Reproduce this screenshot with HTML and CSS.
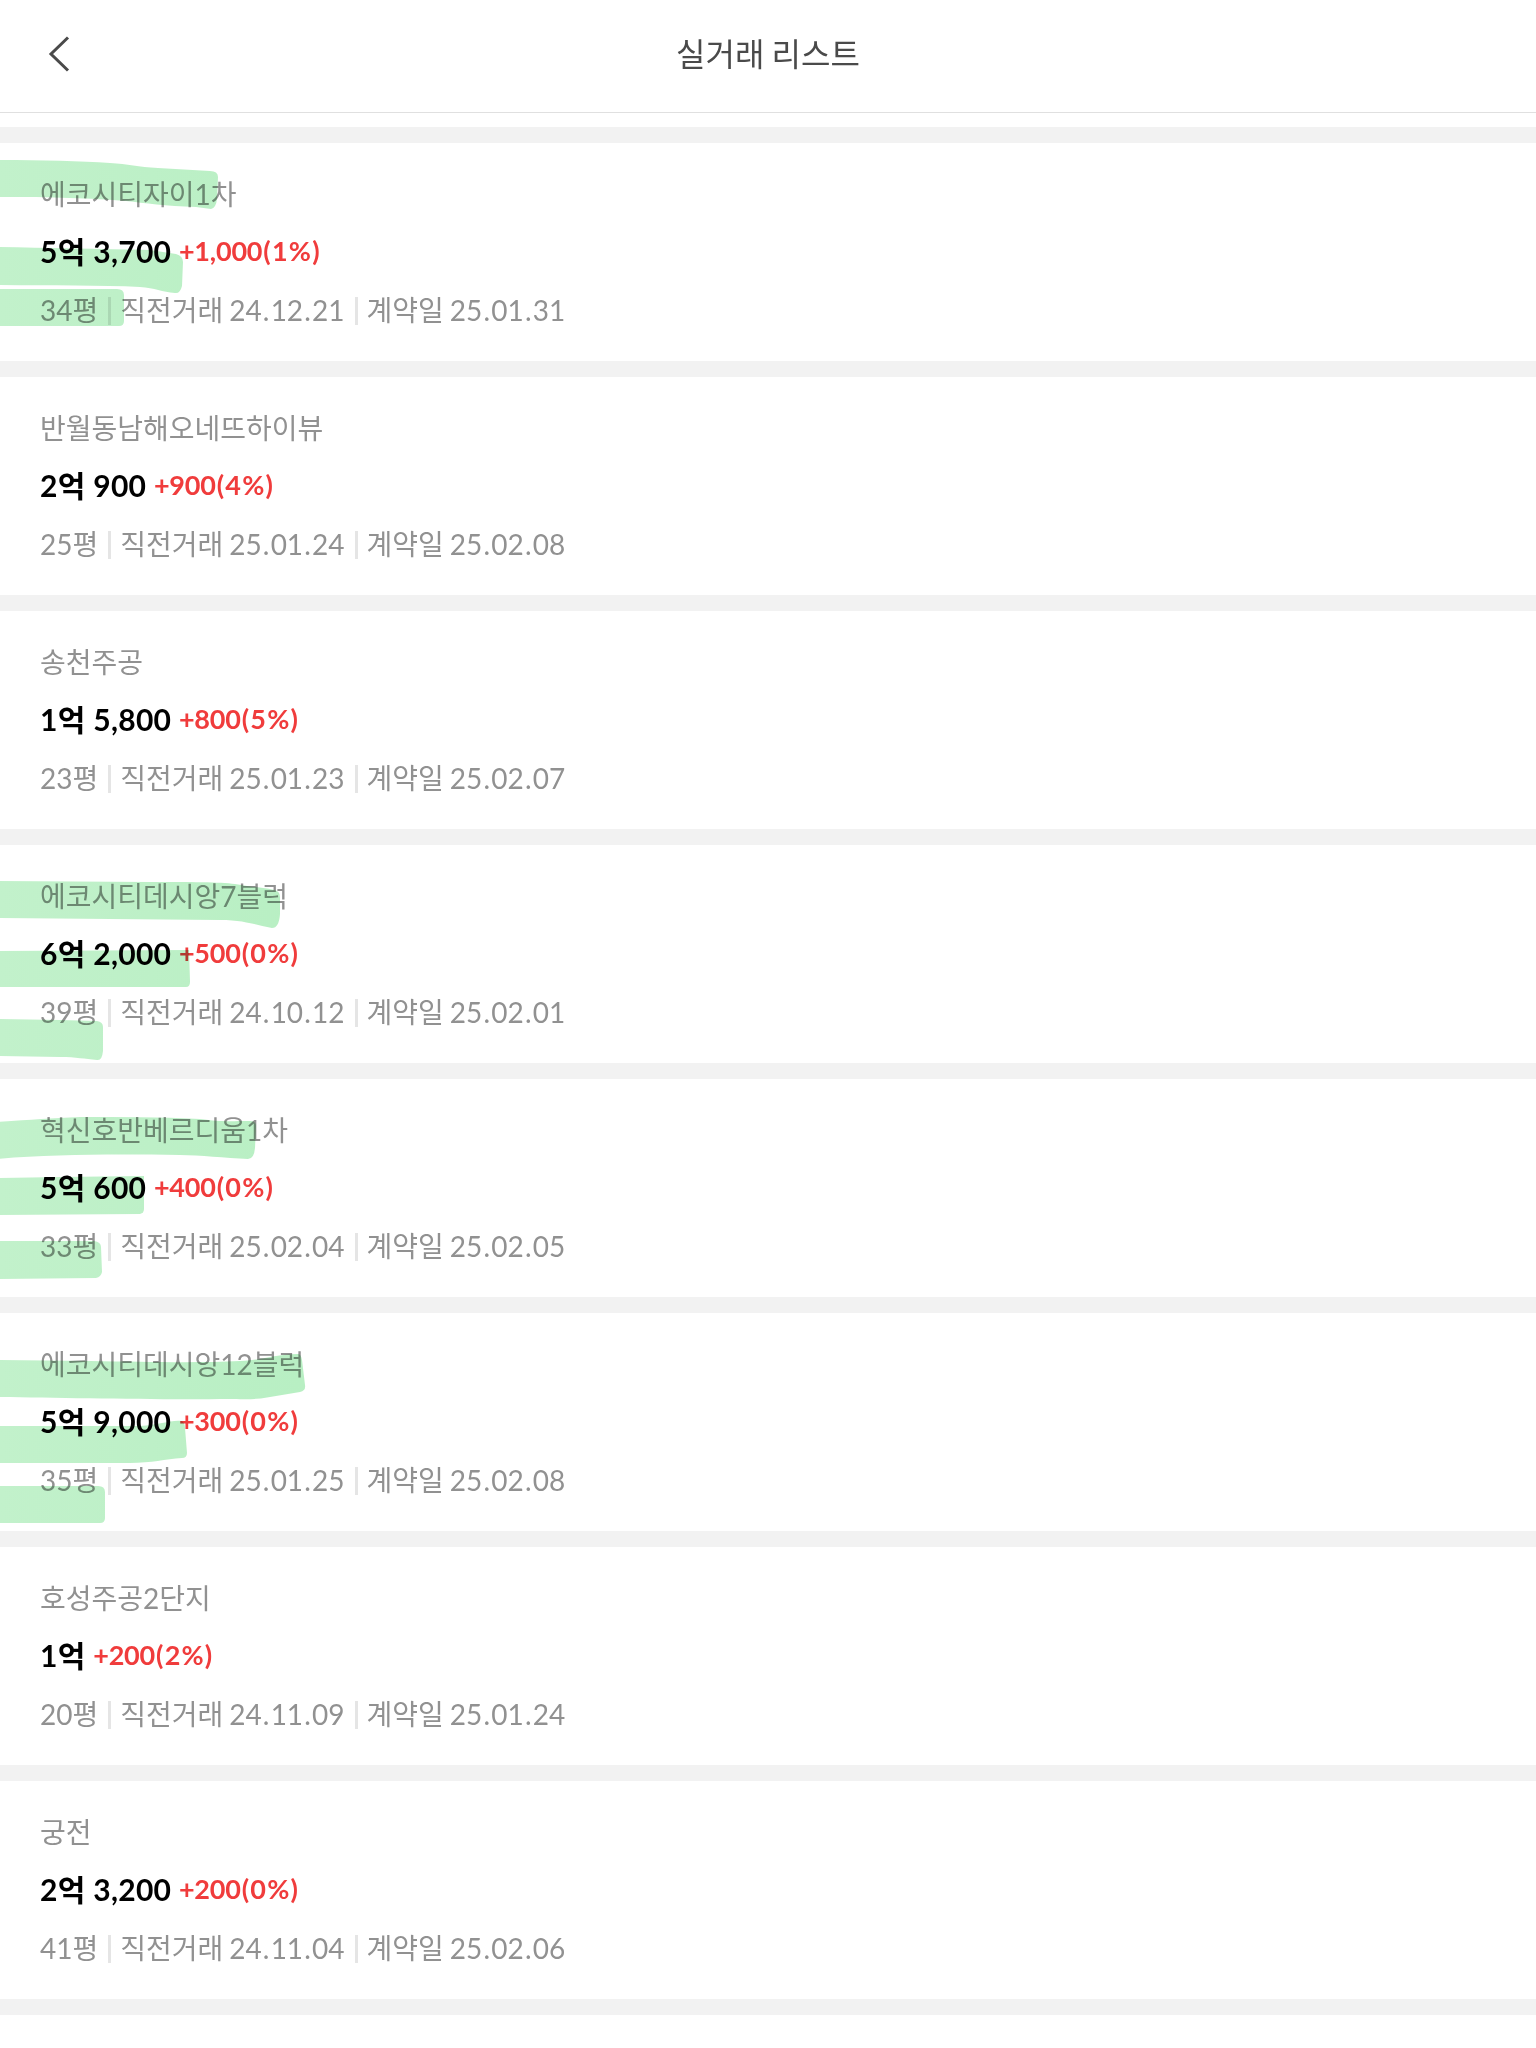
FILE: index.html
```
<!DOCTYPE html>
<html lang="ko">
<head>
    <meta charset="UTF-8">
    <meta name="viewport" content="width=device-width, initial-scale=1.0">
    <title>실거래 리스트</title>
    <link rel="stylesheet" href="styles.css">
</head>
<body>
    <header class="header">
        <button class="back" aria-label="뒤로">
            <svg width="24" height="40" viewBox="0 0 24 40"><path d="M20 3.5L3 20L20 36.5"/></svg>
        </button>
        <h1>실거래 리스트</h1>
    </header>

    <main class="list">
        <section class="item">
            <h2 class="name">에코시티자이1차</h2>
            <p class="price">5억 3,700 <span class="change">+1,000<span class="rate">(1%)</span></span></p>
            <p class="detail"><span>34평</span><span>직전거래 24<i>.</i>12<i>.</i>21</span><span>계약일 25<i>.</i>01<i>.</i>31</span></p>
        </section>
        <section class="item">
            <h2 class="name">반월동남해오네뜨하이뷰</h2>
            <p class="price">2억 900 <span class="change">+900<span class="rate">(4%)</span></span></p>
            <p class="detail"><span>25평</span><span>직전거래 25<i>.</i>01<i>.</i>24</span><span>계약일 25<i>.</i>02<i>.</i>08</span></p>
        </section>
        <section class="item">
            <h2 class="name">송천주공</h2>
            <p class="price">1억 5,800 <span class="change">+800<span class="rate">(5%)</span></span></p>
            <p class="detail"><span>23평</span><span>직전거래 25<i>.</i>01<i>.</i>23</span><span>계약일 25<i>.</i>02<i>.</i>07</span></p>
        </section>
        <section class="item">
            <h2 class="name">에코시티데시앙7블럭</h2>
            <p class="price">6억 2,000 <span class="change">+500<span class="rate">(0%)</span></span></p>
            <p class="detail"><span>39평</span><span>직전거래 24<i>.</i>10<i>.</i>12</span><span>계약일 25<i>.</i>02<i>.</i>01</span></p>
        </section>
        <section class="item">
            <h2 class="name">혁신호반베르디움1차</h2>
            <p class="price">5억 600 <span class="change">+400<span class="rate">(0%)</span></span></p>
            <p class="detail"><span>33평</span><span>직전거래 25<i>.</i>02<i>.</i>04</span><span>계약일 25<i>.</i>02<i>.</i>05</span></p>
        </section>
        <section class="item">
            <h2 class="name">에코시티데시앙12블럭</h2>
            <p class="price">5억 9,000 <span class="change">+300<span class="rate">(0%)</span></span></p>
            <p class="detail"><span>35평</span><span>직전거래 25<i>.</i>01<i>.</i>25</span><span>계약일 25<i>.</i>02<i>.</i>08</span></p>
        </section>
        <section class="item">
            <h2 class="name">호성주공2단지</h2>
            <p class="price">1억 <span class="change">+200<span class="rate">(2%)</span></span></p>
            <p class="detail"><span>20평</span><span>직전거래 24<i>.</i>11<i>.</i>09</span><span>계약일 25<i>.</i>01<i>.</i>24</span></p>
        </section>
        <section class="item">
            <h2 class="name">궁전</h2>
            <p class="price">2억 3,200 <span class="change">+200<span class="rate">(0%)</span></span></p>
            <p class="detail"><span>41평</span><span>직전거래 24<i>.</i>11<i>.</i>04</span><span>계약일 25<i>.</i>02<i>.</i>06</span></p>
        </section>
    </main>

    <!-- highlighter strokes -->
    <svg class="marker" width="400" height="2048" viewBox="0 0 400 2048">
        <defs>
            <linearGradient id="ink" gradientUnits="userSpaceOnUse" x1="0" y1="0" x2="300" y2="0">
                <stop offset="0" stop-color="#c2f1cb"/>
                <stop offset="1" stop-color="#b8efc3"/>
            </linearGradient>
        </defs>
        <g fill="url(#ink)">
            <path d="M-4 160C40 160 80 161 110 163C128 164 138 167 158 168L210 171Q218 171 218 177L217 199Q216 208 211 209L196 207C165 206 145 203 126 201C90 198 50 197 -4 197Z"/>
            <path d="M-4 247C40 248 100 249 150 250L176 254Q183 256 183 262L182 286Q180 294 175 293C162 292 155 288 140 287C100 285 50 286 -4 285Z"/>
            <path d="M-4 289L117 289Q124 289 124 295L124 321Q124 326 119 326L-4 326Z"/>
            <path d="M-4 881L150 882C190 882 220 882 235 884C250 887 262 887 274 890Q280 891 280 897L280 914Q279 928 272 928C258 926 246 920 220 920L-4 918Z"/>
            <path d="M-4 951L189 950L190 982Q190 987 186 987L-4 987Z"/>
            <path d="M-4 1019L60 1020L97 1021Q103 1022 103 1027L103 1051Q102 1061 97 1060C84 1059 77 1057 60 1057L-4 1056Z"/>
            <path d="M-4 1122C30 1120 50 1118 80 1117C120 1117 160 1117 200 1119C220 1122 230 1121 250 1121Q256 1121 256 1126L255 1148Q254 1159 248 1159C225 1158 200 1155 180 1155C120 1154 50 1154 -4 1159Z"/>
            <path d="M-4 1178L60 1177L144 1176L144 1209Q144 1213 140 1214L-4 1215Z"/>
            <path d="M-4 1241L94 1241Q101 1242 101 1247L102 1272Q101 1277 96 1278L-4 1279Z"/>
            <path d="M-4 1360L90 1361C150 1362 200 1363 240 1361C265 1360 275 1354 298 1354Q301 1354 302 1360L305 1385Q306 1391 300 1392L270 1397C255 1400 240 1399 230 1399C160 1400 60 1398 -4 1397Z"/>
            <path d="M-4 1426L140 1426C160 1425 170 1420 181 1421Q185 1422 185 1428L187 1453Q187 1458 182 1458C165 1459 152 1463 130 1463L-4 1463Z"/>
            <path d="M-4 1486L98 1486Q105 1486 105 1492L105 1518Q105 1523 100 1523L-4 1523Z"/>
        </g>
    </svg>
</body>
</html>
```
FILE: styles.css
```
* {
    box-sizing: border-box;
}
body {
    position: relative;
    margin: 0;
    height: 2048px;
    overflow: hidden;
    background-color: #fff;
    font-family: Lato, "Noto Sans CJK KR", sans-serif;
    font-kerning: none;
}
h1, h2, p {
    margin: 0;
    font-weight: 400;
}
.header {
    display: grid;
    grid-template-columns: 120px 1fr 120px;
    align-items: center;
    height: 113px;
    padding-bottom: 5px;
    border-bottom: 1px solid #e0e0e0;
}
.header h1 {
    font-size: 32px;
    line-height: 48px;
    text-align: center;
    word-spacing: -1px;
    color: #4a4a4a;
}
.back {
    display: flex;
    padding: 0 0 0 48px;
    border: none;
    background: none;
}
.back path {
    fill: none;
    stroke: #4a4a4a;
    stroke-width: 3;
}
.list {
    padding-top: 14px;
}
.item {
    height: 234px;
    padding: 30px 40px 0;
    border-top: 16px solid #f2f2f2;
}
.item:last-child {
    height: 250px;
    border-bottom: 16px solid #f2f2f2;
}
.name {
    font-size: 28px;
    line-height: 42px;
    color: #919191;
}
.price {
    height: 46px;
    margin-top: 13px;
    font-size: 30px;
    font-weight: 700;
    line-height: 46px;
    letter-spacing: 0.3px;
    color: #000;
}
.change {
    font-size: 27px;
    line-height: 1;
    letter-spacing: -0.2px;
    vertical-align: 2px;
    color: #f03c3c;
}
.rate {
    margin-left: 1px;
    letter-spacing: 1.2px;
}
.detail {
    display: flex;
    align-items: center;
    margin-top: 15px;
    font-size: 28px;
    line-height: 42px;
    word-spacing: -1.3px;
    color: #919191;
}
.detail i {
    margin: 0 1.2px;
    font-style: normal;
}
.detail span + span::before {
    content: "";
    display: inline-block;
    width: 3px;
    height: 28px;
    margin: 0 9px 0 10px;
    background-color: #e5e5e5;
    vertical-align: -4px;
}
.marker {
    position: absolute;
    top: 0;
    left: 0;
    mix-blend-mode: multiply;
    pointer-events: none;
    filter: blur(0.6px);
}
```
